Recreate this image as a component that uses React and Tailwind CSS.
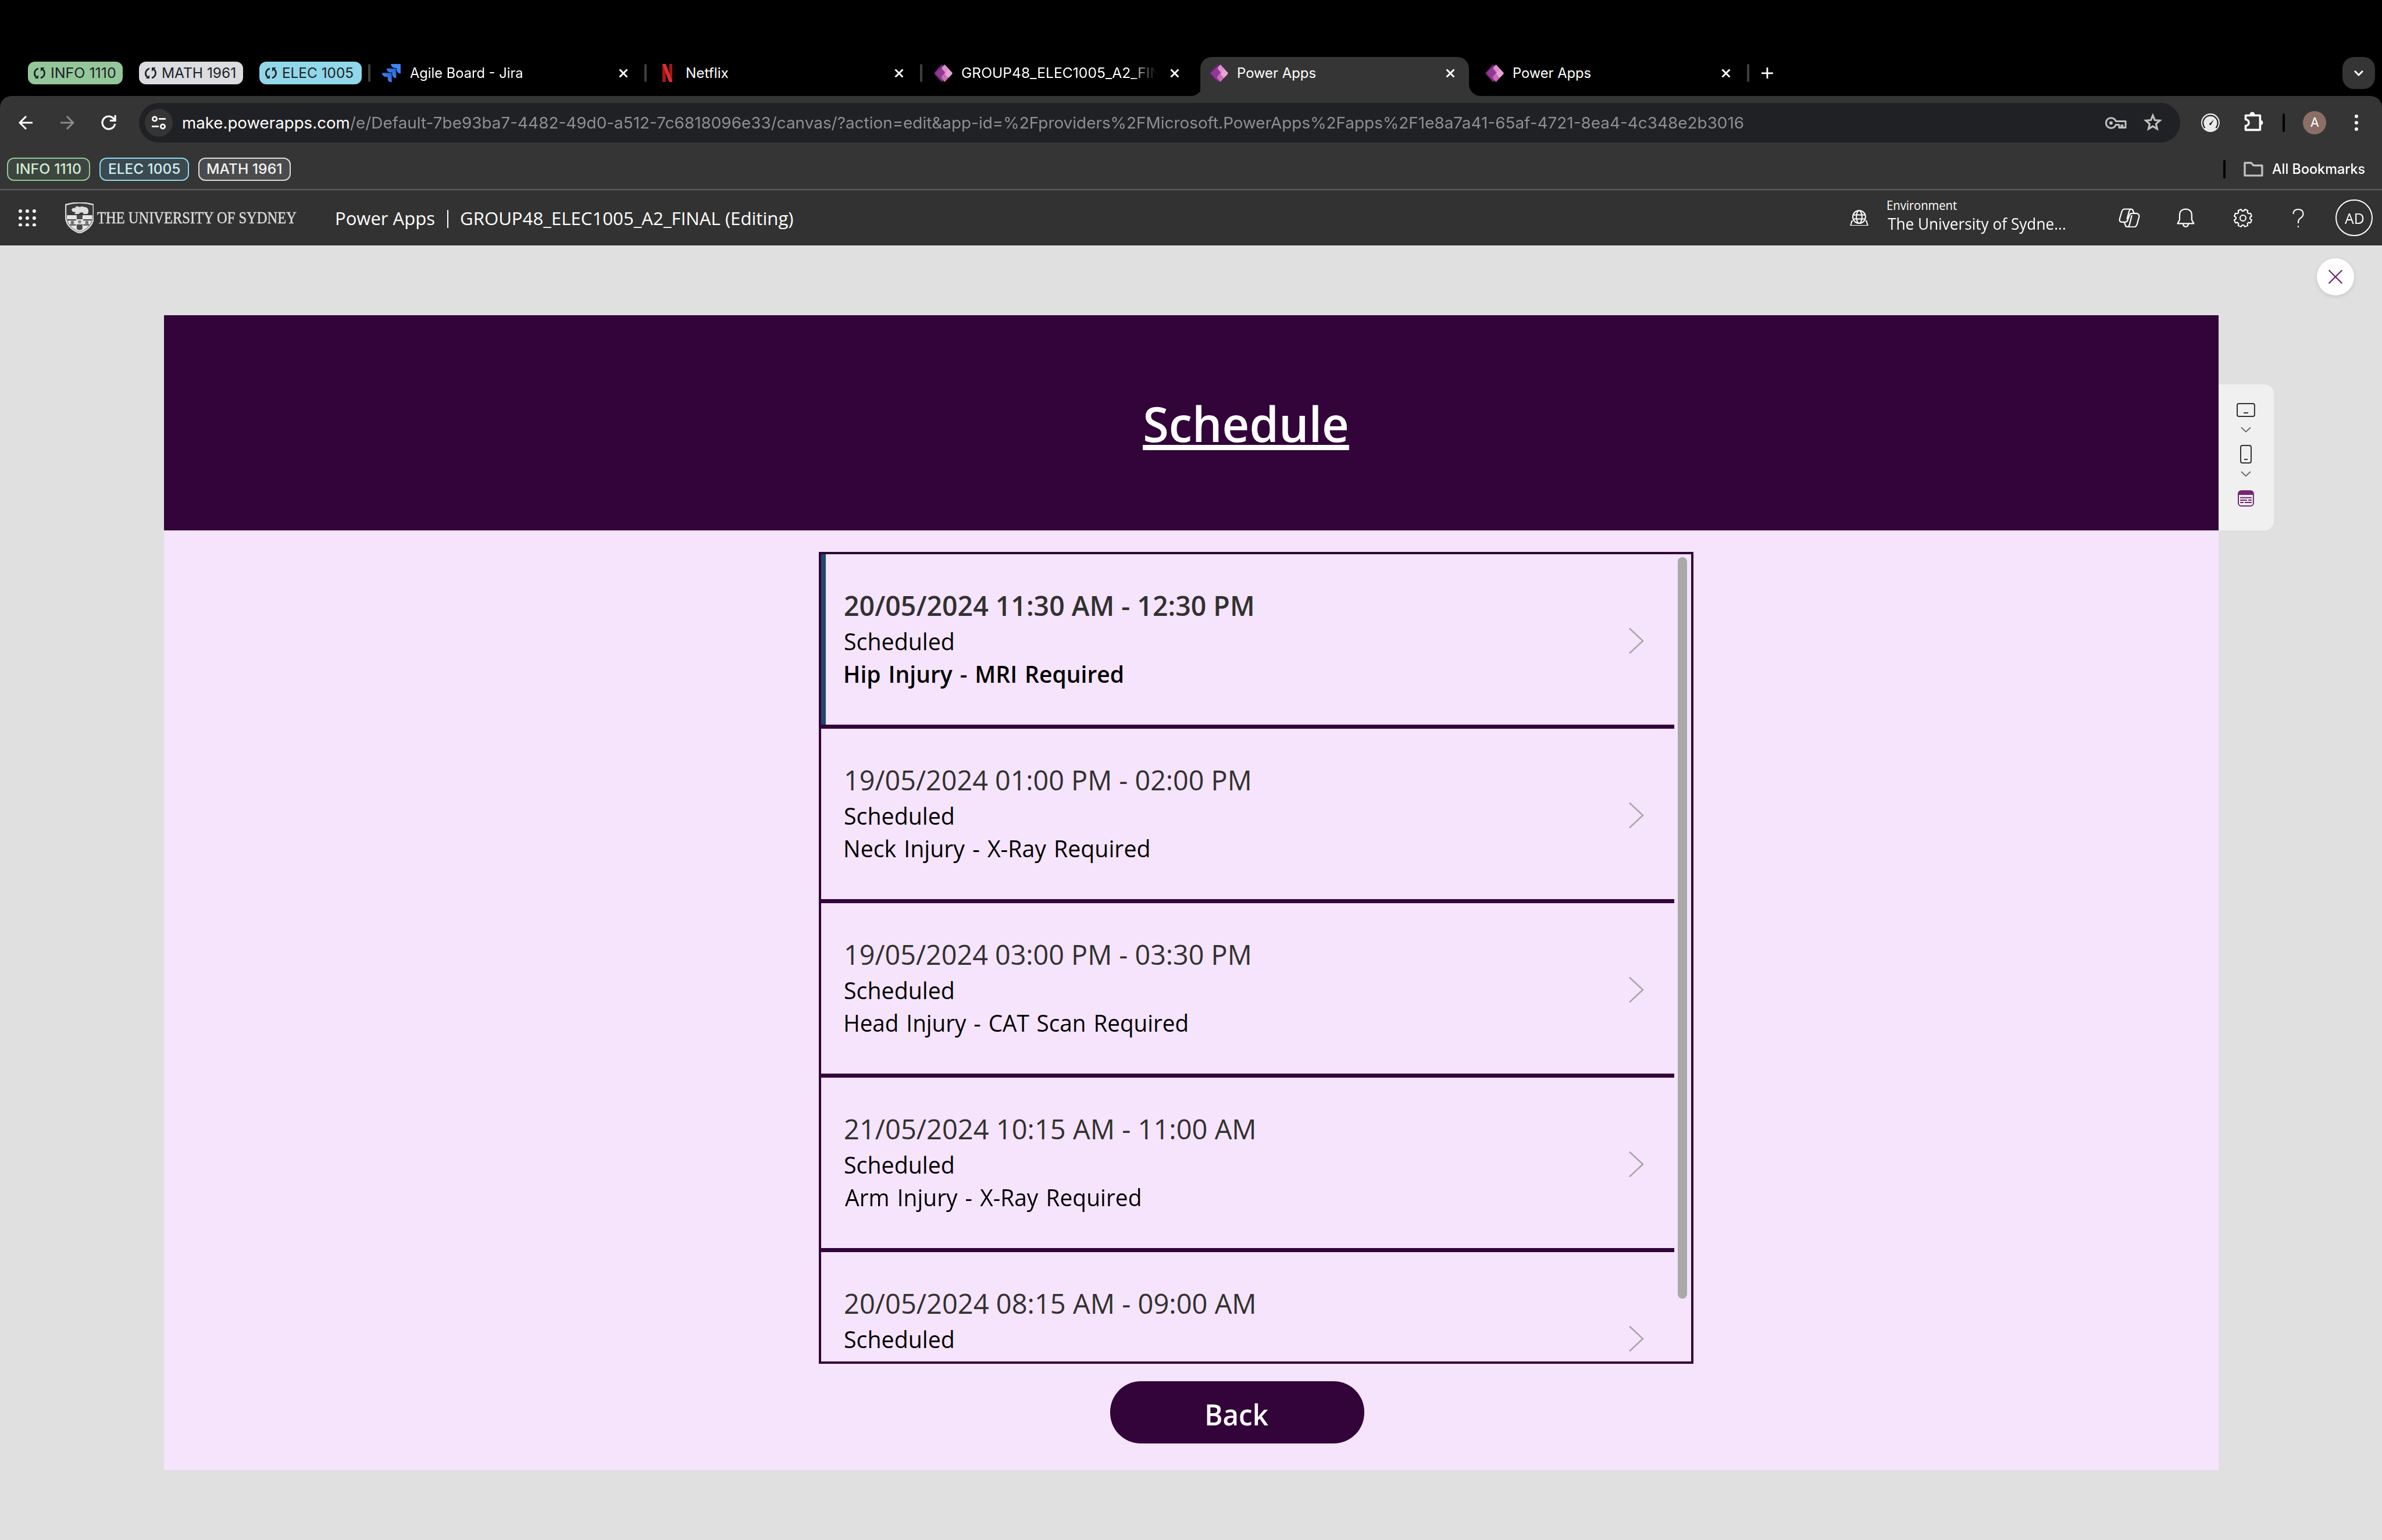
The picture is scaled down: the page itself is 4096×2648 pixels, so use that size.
import { useLayoutEffect, useRef, useState } from "react";

/* One line of text whose painted width is exactly w pixels. */
function Line({ w, className = "", children }) {
  const ref = useRef(null);
  const [fit, setFit] = useState({ s: 1, t: 0 });
  useLayoutEffect(() => {
    const cs = getComputedStyle(ref.current);
    const ctx = document.createElement("canvas").getContext("2d");
    ctx.font = `${cs.fontWeight} ${cs.fontSize} ${cs.fontFamily}`;
    ctx.wordSpacing = cs.wordSpacing;
    const m = ctx.measureText(ref.current.textContent);
    const s = w / (m.actualBoundingBoxLeft + m.actualBoundingBoxRight);
    setFit({ s, t: m.actualBoundingBoxLeft * s });
  }, [w]);
  return (
    <span className={`block shrink-0 whitespace-nowrap ${className}`} style={{ width: w }}>
      <span
        ref={ref}
        className="inline-block origin-left align-top"
        style={{ transform: `translateX(${fit.t}px) scaleX(${fit.s})` }}
      >
        {children}
      </span>
    </span>
  );
}

const UI = "font-[Inter,sans-serif]";
const SEGOE = "font-['Open_Sans',sans-serif]";

function SyncIcon() {
  return (
    <svg className="ml-2.5 h-5 w-5 shrink-0" viewBox="0 0 20 20" fill="none">
      <path d="M8 1.8C-.2 4.6 0 13.4 4.6 16.6M12 18.2c8.2-2.8 8-11.6 3.4-14.8" stroke="#202124" strokeWidth="2.8" />
      <path d="M8 13v7H1zM12 7V0h7z" fill="#202124" />
    </svg>
  );
}

function GroupChip({ className, w, children }) {
  return (
    <div className={`flex h-10 shrink-0 items-center rounded-xl text-[24px] leading-none text-[#202124] ${className}`}>
      <SyncIcon />
      <Line w={w} className="ml-[11px]">{children}</Line>
    </div>
  );
}

function CloseX() {
  return (
    <svg className="h-4 w-4 shrink-0" viewBox="0 0 16 16" stroke="#fff" strokeWidth="3">
      <path d="M1.5 1.5l13 13M14.5 1.5l-13 13" />
    </svg>
  );
}

function JiraIcon() {
  return (
    <svg className="h-8 w-8 shrink-0" viewBox="0 0 24 24">
      <defs>
        <linearGradient id="jg" x1="1" y1="0" x2="0.3" y2="0.8">
          <stop offset="0.1" stopColor="#1f5fd0" />
          <stop offset="0.8" stopColor="#4285f4" />
        </linearGradient>
      </defs>
      <path fill="#4285f4" d="M23.013 0H11.455a5.215 5.215 0 0 0 5.215 5.215h2.129v2.057A5.215 5.215 0 0 0 24 12.483V1.005A1.001 1.001 0 0 0 23.013 0z" />
      <path fill="url(#jg)" d="M17.294 5.757H5.736a5.215 5.215 0 0 0 5.215 5.214h2.129v2.058a5.218 5.218 0 0 0 5.215 5.214V6.758a1.001 1.001 0 0 0-1.001-1.001z" />
      <path fill="url(#jg)" d="M11.571 11.513H0a5.218 5.218 0 0 0 5.232 5.215h2.13v2.057A5.215 5.215 0 0 0 12.575 24V12.518a1.005 1.005 0 0 0-1.005-1.005z" />
    </svg>
  );
}

function NetflixIcon() {
  return (
    <svg className="h-8 w-[18px] shrink-0" viewBox="0 0 18 32">
      <path d="M0 0h6v32L0 32zM12 0h6v32h-6z" fill="#a4161a" />
      <path d="M0 0h6l12 32h-6z" fill="#d8302c" />
    </svg>
  );
}

function PowerAppsIcon() {
  return (
    <svg className="h-8 w-8 shrink-0" viewBox="0 0 32 32">
      <path d="M13 1l5 3v24l-5 3L1 17.5Q0 16 1 14.500z" fill="#6a2173" />
      <path d="M16 2L3 14.500Q1.500 16 3 17.500L14 29l6-13z" fill="#8e3a92" />
      <path d="M18.500 1L31 14.500Q32.300 16 31 17.500L18.500 31Q16 29 13.500 24.500Q12.500 22 15 19.500L18 16.500Q19 14 16 11Q12.500 8 14.500 6z" fill="#cc6cb9" />
      <path d="M18.500 1L31 14.500Q32.300 16 31 17.500L27 22L19.500 14Q17 10.500 15 9.500Q13.500 7.500 14.500 6z" fill="#dd8ecb" />
      <path d="M24.500 9L31 15Q32 16 31 17.200L24.800 24L19 17.500z" fill="#e3a6d6" />
    </svg>
  );
}

function Divider({ className }) {
  return <div className={`h-8 w-1 shrink-0 rounded-full ${className}`} />;
}

function TabStrip() {
  return (
    <div className={`flex h-[166px] bg-black pt-[98px] ${UI}`}>
      <div className="flex h-14 w-full items-center text-[24px] leading-none text-white">
        <GroupChip className="ml-12 w-[164px] bg-[#93c79a]" w={110}>INFO 1110</GroupChip>
        <GroupChip className="ml-7 w-[180px] bg-[#dadce0]" w={125}>MATH 1961</GroupChip>
        <GroupChip className="ml-7 w-[176px] bg-[#8fd7e9]" w={121}>ELEC 1005</GroupChip>

        <div className="ml-[11px] flex w-[477px] shrink-0 items-center">
          <Divider className="bg-[#3f3f3f]" />
          <div className="w-[21px]" />
          <JiraIcon />
          <Line w={194} className="ml-4">Agile Board - Jira</Line>
          <div className="ml-auto mr-[28px]"><CloseX /></div>
        </div>
        <div className="flex w-[476px] shrink-0 items-center">
          <Divider className="bg-[#3f3f3f]" />
          <div className="w-[27px]" />
          <NetflixIcon />
          <Line w={72} className="ml-[25px]">Netflix</Line>
          <div className="ml-auto mr-[28px]"><CloseX /></div>
        </div>
        <div className="flex w-[468px] shrink-0 items-center">
          <Divider className="bg-[#3f3f3f]" />
          <div className="w-[20px]" />
          <PowerAppsIcon />
          <div className="ml-4 h-8 w-[337px] overflow-hidden pt-1 [mask-image:linear-gradient(90deg,#000_86%,transparent_100%)]">
            <Line w={374}>GROUP48_ELEC1005_A2_FINAL</Line>
          </div>
          <div className="ml-auto mr-[20px]"><CloseX /></div>
        </div>

        <div className="flex h-[68px] shrink-0 self-start">
          <svg className="-mr-1 h-5 w-5 self-end" viewBox="0 0 20 20"><path d="M20 0v20H0A20 20 0 0 0 20 0z" fill="#353535" /></svg>
          <div className="flex h-[68px] w-[464px] items-center rounded-t-[20px] bg-[#353535] pb-3 pl-4">
            <PowerAppsIcon />
            <Line w={134} className="ml-[17px]">Power Apps</Line>
            <div className="ml-auto mr-6"><CloseX /></div>
          </div>
          <svg className="h-5 w-5 self-end" viewBox="0 0 20 20"><path d="M0 0v20h20A20 20 0 0 1 0 0z" fill="#353535" /></svg>
        </div>

        <div className="ml-2 flex w-[452px] shrink-0 items-center">
          <PowerAppsIcon />
          <Line w={133} className="ml-[17px]">Power Apps</Line>
          <div className="ml-auto mr-[28px]"><CloseX /></div>
        </div>
        <Divider className="bg-[#3f3f3f]" />
        <svg className="ml-[21px] h-5 w-5 shrink-0" viewBox="0 0 20 20" stroke="#fff" strokeWidth="2.8"><path d="M0 10h20M10 0v20" /></svg>
        <div className="ml-auto mr-3 flex h-14 w-14 items-center justify-center rounded-[20px] bg-[#353535]">
          <svg className="h-3 w-[18px]" viewBox="0 0 18 12" fill="none" stroke="#fff" strokeWidth="3"><path d="M2 2l7 7 7-7" /></svg>
        </div>
      </div>
    </div>
  );
}

function AddressBar() {
  return (
    <div className={`flex h-[92px] w-full items-center ${UI}`}>
      <svg className="ml-8 h-6 w-6 shrink-0" viewBox="0 0 24 24" fill="none" stroke="#fff" strokeWidth="3"><path d="M24 12H2.500M13 1L2 12l11 11" /></svg>
      <svg className="ml-12 h-6 w-6 shrink-0" viewBox="0 0 24 24" fill="none" stroke="#8a8a8a" strokeWidth="3"><path d="M0 12h21.500M11 1l11 11-11 11" /></svg>
      <svg className="ml-[47px] h-[26px] w-[26px] shrink-0" viewBox="0 0 26 26" fill="none" stroke="#fff" strokeWidth="3.200">
        <path d="M22.500 7.500A11 11 0 1 0 23.800 15" />
        <path d="M24.200 0v9.400H15" />
      </svg>
      <div className="ml-[39px] flex h-[68px] w-[3524px] shrink-0 items-center rounded-full bg-[#202124]">
        <div className="ml-2.5 flex h-12 w-12 shrink-0 items-center justify-center rounded-full bg-[#353535]">
          <svg className="h-6 w-6" viewBox="0 0 24 24" fill="none" stroke="#fff" strokeWidth="2.800">
            <circle cx="5" cy="5.500" r="3.600" /><path d="M12 5.500h12M0 18.500h12" /><circle cx="19" cy="18.500" r="3.600" />
          </svg>
        </div>
        <div className="ml-[18px] flex pt-px text-[27.5px] leading-none text-white">
          <Line w={286}>make.powerapps.com</Line>
          <Line w={2407} className="ml-[2px] text-[#8e8f91]">
            /e/Default-7be93ba7-4482-49d0-a512-7c6818096e33/canvas/?action=edit&amp;app-id=%2Fproviders%2FMicrosoft.PowerApps%2Fapps%2F1e8a7a41-65af-4721-8ea4-4c348e2b3016
          </Line>
        </div>
        <svg className="ml-auto h-[21px] w-[37px] shrink-0" viewBox="0 0 37 21" fill="none" stroke="#c0c0c0" strokeWidth="3">
          <path d="M18.500 7.500A8.800 8.800 0 1 0 18.500 13.500H24v5h4v-4h2v4h5.200V7.500z" strokeLinejoin="round" />
          <circle cx="10" cy="10.500" r="3" fill="#c0c0c0" stroke="none" />
        </svg>
        <svg className="mb-[2px] ml-[28px] mr-[31px] h-8 w-[34px] shrink-0" viewBox="0 0 34 32" fill="none" stroke="#c0c0c0" strokeWidth="3.200">
          <path d="M17 4.500l3.400 8.100 8.800.8-6.700 5.800 2 8.600L17 23.200l-7.500 4.600 2-8.600-6.700-5.800 8.800-.8z" />
        </svg>
      </div>
      <svg className="ml-9 h-8 w-8 shrink-0" viewBox="0 0 32 32" fill="none">
        <circle cx="16" cy="16" r="16" fill="#e8eae8" />
        <path d="M6.500 25A12.800 12.800 0 1 1 25.500 25" stroke="#202020" strokeWidth="2.200" />
        <path d="M13.500 18.500L22 10.500l-5.500 10z" fill="#202020" />
      </svg>
      <svg className="mb-1 ml-[41px] h-[34px] w-[34px] shrink-0" viewBox="0 0 34 34" fill="none">
        <path d="M3.500 6.500h25v25h-25v-7a5.500 5.500 0 0 0 0-11z" stroke="#fff" strokeWidth="3.600" strokeLinejoin="round" />
        <path d="M10.500 5a4.500 4.500 0 0 1 9 0zM29 14.500a4.500 4.500 0 0 1 0 9z" fill="#fff" />
      </svg>
      <Divider className="ml-[33px] bg-black" />
      <div className="ml-8 flex h-10 w-10 shrink-0 items-center justify-center rounded-full bg-[#8b6f66] text-[22px] leading-none text-white">A</div>
      <svg className="ml-[48px] h-7 w-2 shrink-0" viewBox="0 0 8 28" fill="#fff"><circle cx="4" cy="3" r="3" /><circle cx="4" cy="14" r="3" /><circle cx="4" cy="25" r="3" /></svg>
    </div>
  );
}

function SavedGroup({ className, w, children }) {
  return (
    <div className={`flex h-10 shrink-0 items-center justify-center rounded-xl border-[2.1px] ${className}`}>
      <Line w={w}>{children}</Line>
    </div>
  );
}

function BookmarksBar() {
  return (
    <div className={`flex h-[68px] items-center text-[24px] leading-none font-medium ${UI}`}>
      <SavedGroup className="ml-3 w-36 border-[#93c79a] bg-[#3d463e] text-[#d0ead3]" w={112}>INFO 1110</SavedGroup>
      <SavedGroup className="ml-4 w-[154px] border-[#8fd7e9] bg-[#3b4a4e] text-[#cdeef7]" w={123}>ELEC 1005</SavedGroup>
      <SavedGroup className="ml-4 w-40 border-[#dadce0] bg-[#4b4b4d] text-[#f1f3f4]" w={129}>MATH 1961</SavedGroup>
      <Divider className="ml-auto bg-black" />
      <svg className="ml-[31px] h-[26px] w-[34px] shrink-0" viewBox="0 0 34 26" fill="none" stroke="#c0c0c0" strokeWidth="3.400" strokeLinejoin="round">
        <path d="M2 2h11l4 4.500h15V24H2z" />
      </svg>
      <Line w={160} className="ml-[15px] mr-[30px] text-white">All Bookmarks</Line>
    </div>
  );
}

function Crest() {
  return (
    <svg className="ml-[50px] h-[54px] w-[50px] shrink-0" viewBox="0 0 50 54">
      <path d="M1 4Q25-3 49 4V26Q48 44 25 53Q2 44 1 26z" fill="#3a3a3a" stroke="#dcdcdc" strokeWidth="2.400" />
      <path d="M3 22h44v5Q45 43 25 51Q5 43 3 27z" fill="#e6e6e6" />
      <path d="M11 13q2-5 6-3 1-4 5-3l3 1q5-2 8 0 6 0 7 5 1 5-2 7h-6l-2-3-5 1-1 2h-8l2-3-5-1z" fill="#dedede" />
      <path d="M20 22h10v7H20zM20 38h10v8q-5 4-10 0zM4 29h15v2.500H4zM31 29h15v2.500H31zM8 38h11v2H8zM31 38h11v2H31z" fill="#4a4a4a" />
      <circle cx="12.500" cy="35" r="3" fill="#707070" /><circle cx="37.500" cy="35" r="3" fill="#707070" /><circle cx="25" cy="33.500" r="3" fill="#8a8a8a" />
    </svg>
  );
}

function gearPath() {
  const pts = [];
  for (let i = 0; i < 8; i++) {
    const a = (i * 45 + 22.5) * (Math.PI / 180);
    [[-0.29, 12.2], [-0.17, 15.4], [0.17, 15.4], [0.29, 12.2]].forEach(([d, r]) => {
      pts.push(`${(17 + r * Math.sin(a + d)).toFixed(2)} ${(17 - r * Math.cos(a + d)).toFixed(2)}`);
    });
  }
  return `M${pts.join("L")}z`;
}

function AppHeader() {
  return (
    <div className={`flex h-24 items-center bg-[#323232] text-white ${SEGOE}`}>
      <svg className="ml-8 h-[30px] w-[30px] shrink-0" viewBox="0 0 30 30" fill="#fff">
        {[3, 15, 27].map((y) => [3, 15, 27].map((x) => <circle key={`${x}-${y}`} cx={x} cy={y} r="3" />))}
      </svg>
      <Crest />
      <Line w={345} className="ml-[6px] font-['Liberation_Serif',serif] text-[29.5px] leading-none text-[#dcdcdc] [-webkit-text-stroke:0.5px_#dcdcdc]">THE UNIVERSITY OF SYDNEY</Line>
      <Line w={169} className="ml-[68px] mt-[3px] text-[31px] leading-10 font-medium">Power Apps</Line>
      <div className="ml-[22px] mt-1 h-8 w-[2.500px] shrink-0 bg-white" />
      <Line w={574} className="ml-[21px] mt-[3px] text-[31px] leading-10 font-medium">GROUP48_ELEC1005_A2_FINAL (Editing)</Line>

      <svg className="ml-auto h-7 w-8 shrink-0" viewBox="0 0 32 28" fill="none" stroke="#fff" strokeWidth="2">
        <circle cx="16" cy="12" r="11" /><ellipse cx="16" cy="12" rx="4.800" ry="11" /><path d="M6 8.500h20M6 15.500h20M5 19H3.500L1.200 27h29.600L28.500 19H27" />
      </svg>
      <div className="-mt-[7px] ml-[34px] flex flex-col">
        <Line w={120} className="h-7 text-[21.5px] leading-7">Environment</Line>
        <Line w={307} className="h-9 text-[27.5px] leading-9">The University of Sydne...</Line>
      </div>
      <svg className="ml-[91px] h-[34px] w-[37px] shrink-0" viewBox="0 0 37 34" fill="none" stroke="#fff" strokeWidth="2.200" strokeLinejoin="round">
        <path d="M10.500 1.500H21q3.500 0 4.500 3.500l1 4H23q-3 0-4 3l-3.500 9q-1 3-4.500 3H5q-4.500-1-3-6L5.500 6q1.500-4.500 5-4.500z" />
        <path d="M26.500 9h5q4.500 1 4 5.500L32 27.500q-1.500 5-5.500 5H16q-3.500 0-4.500-3.500L10 24" />
        <path d="M21 1.500q-2 1-3 4.500l-3.500 13M23 12l-4 16q-1 3.500-3 4.500" />
      </svg>
      <svg className="ml-[64px] h-[34px] w-[31px] shrink-0" viewBox="0 0 31 34" fill="none" stroke="#fff" strokeWidth="2.200" strokeLinejoin="round">
        <path d="M15.500 1.500Q26 2 26 12v8l3.500 6.500h-28L5 20v-8Q5 2 15.500 1.500z" /><path d="M11 27q.5 5 4.500 5t4.500-5" />
      </svg>
      <svg className="ml-[66px] h-[34px] w-[34px] shrink-0" viewBox="0 0 34 34" fill="none" stroke="#fff" strokeWidth="2.100" strokeLinejoin="round">
        <path d={gearPath()} /><circle cx="17" cy="17" r="5" />
      </svg>
      <svg className="ml-[68px] h-[34px] w-5 shrink-0" viewBox="0 0 20 34" fill="none" stroke="#fff" strokeWidth="2.200">
        <path d="M1.500 10Q1.500 2 10 2t8.500 8q0 4-4.500 7t-4 9" /><path d="M10 30.500v2.500" />
      </svg>
      <div className="ml-[55px] mr-4 flex h-16 w-16 shrink-0 items-center justify-center rounded-full border-[2.1px] border-white text-[26px] leading-none">
        <Line w={33} className="mt-[2px]">AD</Line>
      </div>
    </div>
  );
}

const appointments = [
  { time: "20/05/2024 11:30 AM - 12:30 PM", tw: 704, note: "Hip Injury - MRI Required", nw: 479, selected: true },
  { time: "19/05/2024 01:00 PM - 02:00 PM", tw: 697, note: "Neck Injury - X-Ray Required", nw: 525, indent: true },
  { time: "19/05/2024 03:00 PM - 03:30 PM", tw: 697, note: "Head Injury - CAT Scan Required", nw: 591, indent: true },
  { time: "21/05/2024 10:15 AM - 11:00 AM", tw: 707, note: "Arm Injury - X-Ray Required", nw: 510 },
  { time: "20/05/2024 08:15 AM - 09:00 AM", tw: 707, note: null },
];

function Appointment({ time, tw, note, nw, selected, indent }) {
  return (
    <div className="flex h-[301.2px] w-[1472px] shrink-0 flex-col">
      <div className="flex h-[294.5px] shrink-0">
        <div className={`w-2 shrink-0 ${selected ? "bg-[#1f4772]" : ""}`} />
        <div className="flex flex-col pl-[33px] pt-[59px]">
          <Line w={tw} className={`h-[60px] text-[47.5px] leading-[60px] text-[#323130] ${selected ? "font-semibold" : ""} ${indent ? "ml-[2px]" : ""}`}>{time}</Line>
          <Line w={187} className="mt-[7px] h-[50px] text-[40.5px] leading-[50px] text-black">Scheduled</Line>
          {note && <Line w={nw} className={`mt-[6px] h-[50px] text-[40.5px] leading-[50px] text-black [word-spacing:3px] ${selected ? "font-semibold" : ""}`}>{note}</Line>}
        </div>
        <svg className="ml-auto mr-[52px] mt-[126px] h-12 w-7 shrink-0" viewBox="0 0 28 48" fill="none" stroke="#a6a6a6" strokeWidth="2.600">
          <path d="M3 2.500L26 24 3 45.500" />
        </svg>
      </div>
      {note && <div className="h-[7px] shrink-0 bg-[#32043a]" />}
    </div>
  );
}

function Gallery() {
  return (
    <div className="ml-[1131px] mt-[37.6px] flex h-[1401px] w-[1509px] overflow-hidden border-[4.1px] border-[#32043a]">
      <div className="-mt-px flex flex-col">
        {appointments.map((a) => <Appointment key={a.time} {...a} />)}
      </div>
      <div className="ml-[6px] mt-[5px] h-[1280px] w-4 shrink-0 rounded-full bg-[#a9a9a9]" />
    </div>
  );
}

function SizeRail() {
  const chevron = (
    <svg className="h-[10px] w-[18px]" viewBox="0 0 18 10" fill="none" stroke="#6b6b6b" strokeWidth="2"><path d="M1 1l8 7.500L17 1" /></svg>
  );
  return (
    <div className="mt-[120px] flex h-[252px] w-[95px] flex-col items-center rounded-r-2xl bg-[#f0f0f0] pt-8">
      <svg className="h-6 w-8" viewBox="0 0 32 24" fill="none" stroke="#323130" strokeWidth="2"><rect x="1" y="1" width="30" height="22" rx="3" /><path d="M12 17h8" /></svg>
      <div className="mt-[17px]">{chevron}</div>
      <svg className="mt-[21px] h-8 w-5" viewBox="0 0 20 32" fill="none" stroke="#323130" strokeWidth="2"><rect x="1" y="1" width="18" height="30" rx="3" /><path d="M7 25h6" /></svg>
      <div className="mt-[13px]">{chevron}</div>
      <svg className="mt-[23px] h-7 w-7" viewBox="0 0 28 28" fill="none" stroke="#742774" strokeWidth="2">
        <rect x="1" y="1" width="26" height="26" rx="5" /><path d="M1 6a5 5 0 0 1 5-5h16a5 5 0 0 1 5 5v2H1z" fill="#742774" stroke="none" />
        <path d="M4 12.800h20M4 17h12M18 17h6M4 21h6M12 21h12" />
      </svg>
    </div>
  );
}

function Stage() {
  return (
    <div className={`relative flex flex-1 items-start bg-[#e0e0e0] pl-[283px] pt-[120px] ${SEGOE}`}>
      <button className="absolute right-12 top-[22px] flex h-16 w-16 items-center justify-center rounded-full bg-white shadow-[0_2px_8px_rgba(0,0,0,0.12)]">
        <svg className="h-[26px] w-[26px]" viewBox="0 0 26 26" stroke="#742774" strokeWidth="2.200"><path d="M1.500 1.500l23 23M24.500 1.500l-23 23" /></svg>
      </button>
      <div className="h-[1994px] w-[3547px] shrink-0 bg-[#f5e4fb]">
        <div className="flex h-[371.6px] bg-[#32043a] pl-[1694px] pt-[128px]">
          <Line w={349} className="h-[120px] text-[84px] leading-[120px] font-semibold text-white [&>span]:underline [&>span]:decoration-[9px] [&>span]:underline-offset-[5px] [&>span]:[text-decoration-skip-ink:none]">Schedule</Line>
        </div>
        <Gallery />
        <button className="ml-[1633px] mt-[30px] flex h-[107.5px] w-[439px] items-center justify-center rounded-[53px] bg-[#32043a] text-[51px] leading-[60px] font-semibold text-white">
          <Line w={107} className="ml-[2px] mt-[6px] text-left">Back</Line>
        </button>
      </div>
      <SizeRail />
    </div>
  );
}

export default function App() {
  return (
    <div className="h-[2648px] w-[4096px] overflow-hidden bg-[#e0e0e0]">
      <div className="flex h-[2660px] w-[4112px] flex-col [zoom:0.99611]">
        <TabStrip />
        <div className="bg-black">
          <div className="h-[160px] rounded-t-[20px] bg-[#353535]">
            <AddressBar />
            <BookmarksBar />
          </div>
        </div>
        <div className="h-[2px] bg-[#606060]" />
        <AppHeader />
        <Stage />
      </div>
    </div>
  );
}
